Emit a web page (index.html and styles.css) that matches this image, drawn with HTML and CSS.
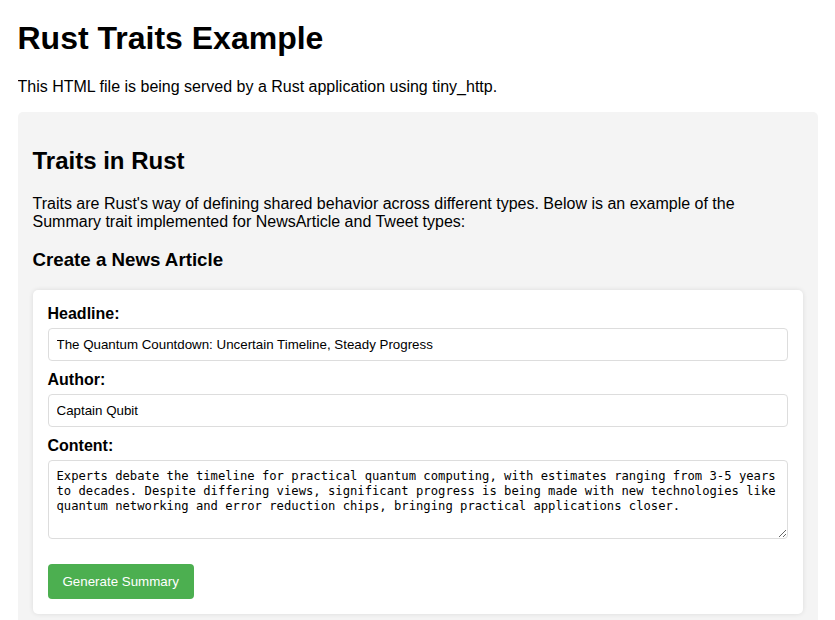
FILE: index.html
```html
<!DOCTYPE html>
<html lang="en">
<head>
<meta charset="utf-8">
<title>Rust Traits Example</title>
<link rel="stylesheet" href="styles.css">
</head>
<body>
<h1 class="title">Rust Traits Example</h1>
<p class="intro">This HTML file is being served by a Rust application using tiny_http.</p>
<div class="container">
  <h2 class="section-title">Traits in Rust</h2>
  <p class="desc">Traits are Rust's way of defining shared behavior across different types. Below is an example of the Summary trait implemented for NewsArticle and Tweet types:</p>
  <h3 class="sub-title">Create a News Article</h3>
  <form class="card">
    <label class="field-label" for="headline">Headline:</label>
    <input class="field-input" id="headline" type="text" value="The Quantum Countdown: Uncertain Timeline, Steady Progress">
    <label class="field-label" for="author">Author:</label>
    <input class="field-input" id="author" type="text" value="Captain Qubit">
    <label class="field-label" for="content">Content:</label>
    <textarea class="field-textarea" id="content" rows="4">Experts debate the timeline for practical quantum computing, with estimates ranging from 3-5 years to decades. Despite differing views, significant progress is being made with new technologies like quantum networking and error reduction chips, bringing practical applications closer.</textarea>
    <button class="btn" type="button">Generate Summary</button>
  </form>
</div>
</body>
</html>
```
FILE: styles.css
```css
html, body {
  background: #ffffff;
}
body {
  font-family: "Liberation Sans", Arial, sans-serif;
  color: #000;
  max-width: 800px;
  margin: 0 auto;
  padding: 0;
}
.title {
  font-size: 32px;
  margin: 19.5px 0 21.44px;
}
.intro {
  font-size: 16px;
  margin: 16px 0;
}
.container {
  background: #f4f4f4;
  border-radius: 5px;
  padding: 15px;
  margin-top: 16px;
}
.section-title {
  font-size: 24px;
  margin: 19.92px 0;
}
.desc {
  font-size: 16px;
  margin: 16px 0;
}
.sub-title {
  font-size: 18.72px;
  margin: 18.72px 0;
}
.card {
  background: #fff;
  border-radius: 5px;
  padding: 15px;
  box-shadow: 0 0 5px rgba(0, 0, 0, 0.1);
}
.field-label {
  display: block;
  font-weight: bold;
  font-size: 16px;
  margin-bottom: 5px;
}
.field-input {
  display: block;
  box-sizing: border-box;
  width: 100%;
  font-family: "Liberation Sans", Arial, sans-serif;
  font-size: 13.333px;
  line-height: 15px;
  padding: 8px;
  border: 1px solid #ddd;
  border-radius: 4px;
  margin: 0 0 10px;
  color: #000;
}
.field-textarea {
  display: block;
  box-sizing: border-box;
  width: 100%;
  font-family: "DejaVu Sans Mono", "Liberation Mono", monospace;
  font-size: 12.2px;
  line-height: 15px;
  height: 79px;
  padding: 8px;
  border: 1px solid #ddd;
  border-radius: 4px;
  margin: 0 0 10px;
  color: #000;
}
.btn {
  display: block;
  margin-top: 25px;
  background: #4caf50;
  color: #fff;
  border: none;
  border-radius: 4px;
  padding: 10px 15px;
  font-family: "Liberation Sans", Arial, sans-serif;
  font-size: 13.333px;
  line-height: 15.3px;
  cursor: pointer;
}
```
